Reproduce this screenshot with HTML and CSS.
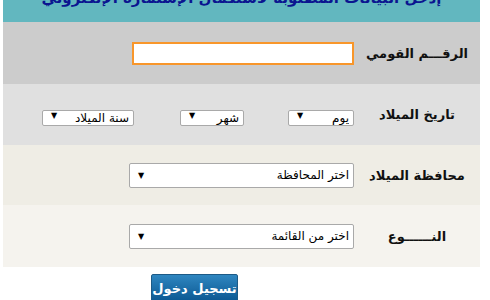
FILE: index.html
```html
<!DOCTYPE html>
<html lang="ar" dir="rtl">
<head>
  <meta charset="UTF-8">
  <title>تسجيل الدخول</title>
  <link rel="stylesheet" href="styles.css">
</head>
<body>

  <div class="wrap">
    <div class="titulo">إدخل البيانات المطلوبة لاستكمال الإستمارة الإلكتروني</div>

    <div class="fila fila1">
      <label>الرقـــم القومي</label>
      <div class="campos">
        <input type="text" class="txt">
      </div>
    </div>

    <div class="fila fila2">
      <label>تاريخ الميلاد</label>
      <div class="campos">
        <span class="sel dia"><select><option>يوم</option></select></span>
        <span class="sel mes"><select><option>شهر</option></select></span>
        <span class="sel anio"><select><option>سنة الميلاد</option></select></span>
      </div>
    </div>

    <div class="fila fila3">
      <label>محافظة الميلاد</label>
      <div class="campos">
        <span class="sel largo"><select><option>اختر المحافظة</option></select></span>
      </div>
    </div>

    <div class="fila fila4">
      <label>النــــــوع</label>
      <div class="campos">
        <span class="sel largo"><select><option>اختر من القائمة</option></select></span>
      </div>
    </div>

    <div class="acciones">
      <button>تسجيل دخول</button>
    </div>
  </div>

</body>
</html>
```

FILE: styles.css
```css
body {
  margin: 0;
  background: #ffffff;
  font-family: "DejaVu Sans", "Liberation Sans", sans-serif;
}

.wrap {
  width: 477px;
  margin: -18px 10px 0 3px;
}

.titulo {
  height: 40px;
  background: #62b7bf;
  color: #0b1590;
  font-weight: bold;
  font-size: 15px;
  line-height: 32px;
  text-align: center;
  overflow: hidden;
}

.fila {
  display: grid;
  grid-template-columns: 126px 1fr;
  align-items: center;
  height: 61px;
}

.fila1 { background: #cccccc; height: 62px; }
.fila2 { background: #e0e0e0; }
.fila3 { background: #efede5; height: 60px; }
.fila4 { background: #f5f3ee; height: 62px; }

.fila label {
  text-align: center;
  font-weight: bold;
  font-size: 13px;
  color: #111;
}

.campos {
  display: flex;
  align-items: center;
}

.txt {
  width: 222px;
  height: 23px;
  box-sizing: border-box;
  border: 2px solid #f8962a;
  background: #fff;
  margin: 0;
  padding: 0;
}

.sel {
  position: relative;
  display: inline-block;
}

.sel select {
  appearance: none;
  -webkit-appearance: none;
  box-sizing: border-box;
  width: 100%;
  height: 100%;
  border: 1px solid #a9a9a9;
  border-radius: 2px;
  background: #fff;
  font-family: "DejaVu Sans", sans-serif;
  font-size: 12px;
  color: #000;
  padding: 0 4px 0 18px;
  margin: 0;
  direction: rtl;
}

.sel::after {
  content: "▼";
  position: absolute;
  left: 9px;
  top: 50%;
  transform: translateY(-50%);
  font-size: 8px;
  color: #000;
  pointer-events: none;
}

.dia { width: 66px; height: 16px; margin-left: 44px; }
.mes { width: 64px; height: 16px; margin-left: 46px; }
.anio { width: 92px; height: 16px; }
.largo { width: 225px; height: 25px; }

.acciones {
  padding-top: 7px;
  padding-right: 242px;
}

button {
  width: 87px;
  height: 28px;
  background: linear-gradient(#2f86c0, #0b5892);
  border: 1px solid #1d5a86;
  border-radius: 2px;
  color: #fff;
  font-family: "DejaVu Sans", sans-serif;
  font-weight: bold;
  font-size: 13px;
  padding: 0;
}
```
